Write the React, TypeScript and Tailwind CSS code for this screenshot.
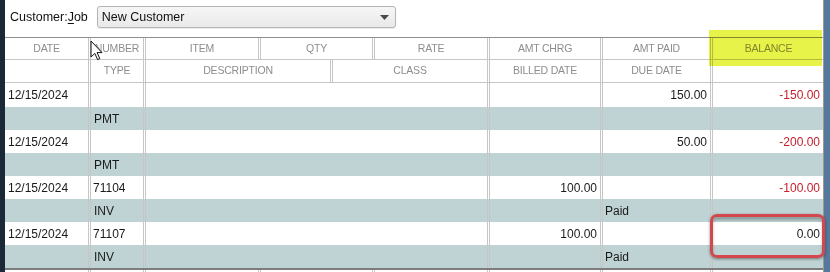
import React from 'react'

const FONT = { fontFamily: '"Liberation Sans", Arial, sans-serif' }

const headTop: [string, number][] = [
  ['DATE', 83],
  ['NUMBER', 55],
  ['ITEM', 115],
  ['QTY', 114],
  ['RATE', 115],
  ['AMT CHRG', 113],
  ['AMT PAID', 110],
  ['BALANCE', 114],
]

const headBottom: [string, number][] = [
  ['', 83],
  ['TYPE', 55],
  ['DESCRIPTION', 187],
  ['CLASS', 157],
  ['BILLED DATE', 113],
  ['DUE DATE', 110],
  ['', 114],
]

type Txn = {
  date: string
  num: string
  chrg: string
  paid: string
  bal: string
  type: string
  due: string
}

const txns: Txn[] = [
  { date: '12/15/2024', num: '', chrg: '', paid: '150.00', bal: '-150.00', type: 'PMT', due: '' },
  { date: '12/15/2024', num: '', chrg: '', paid: '50.00', bal: '-200.00', type: 'PMT', due: '' },
  { date: '12/15/2024', num: '71104', chrg: '100.00', paid: '', bal: '-100.00', type: 'INV', due: 'Paid' },
  { date: '12/15/2024', num: '71107', chrg: '100.00', paid: '', bal: '0.00', type: 'INV', due: 'Paid' },
]

function Cell({
  w,
  first,
  className = '',
  children,
}: {
  w: number
  first?: boolean
  className?: string
  children?: React.ReactNode
}) {
  return (
    <div
      style={{ width: w }}
      className={`flex h-full shrink-0 items-center overflow-hidden whitespace-nowrap ${
        first ? '' : 'border-l-[3px] border-double border-[#c6c6c6]'
      } ${className}`}
    >
      {children}
    </div>
  )
}

function HeaderRow({ cols, top }: { cols: [string, number][]; top?: boolean }) {
  return (
    <div
      className={`flex h-[23px] shrink-0 border-b border-[#c6c6c6] ${top ? 'border-t border-t-[#8f8f8f]' : ''}`}
    >
      {cols.map(([label, w], i) => (
        <Cell key={i} w={w} first={i === 0} className="justify-center">
          <span className="text-[10.5px] tracking-[-0.2px] text-[#8d8d8d]">{label}</span>
        </Cell>
      ))}
    </div>
  )
}

function TxnRows({ t, tall }: { t: Txn; tall?: boolean }) {
  const neg = t.bal.startsWith('-')
  return (
    <>
      <div
        className={`flex shrink-0 bg-white text-[12px] text-[#1a1a1a] ${tall ? 'h-[24px]' : 'h-[23px]'}`}
      >
        <Cell w={83} first className="pl-[3px]">
          {t.date}
        </Cell>
        <Cell w={55} className="pl-[2px]">
          {t.num}
        </Cell>
        <Cell w={344} />
        <Cell w={113} className="justify-end pr-[3px]">
          {t.chrg}
        </Cell>
        <Cell w={110} className="justify-end pr-[3px]">
          {t.paid}
        </Cell>
        <Cell w={114} className={`justify-end pr-[4px] ${neg ? 'text-[#c7202b]' : ''}`}>
          {t.bal}
        </Cell>
      </div>
      <div className="flex h-[23px] shrink-0 bg-[#bfd3d4] text-[12px] text-[#1a1a1a]">
        <Cell w={83} first />
        <Cell w={55} className="pl-[3px]">
          {t.type}
        </Cell>
        <Cell w={344} />
        <Cell w={113} />
        <Cell w={110} className="pl-[2px]">
          {t.due}
        </Cell>
        <Cell w={114} />
      </div>
    </>
  )
}

export default function App() {
  return (
    <div style={FONT} className="relative flex h-[272px] w-[830px] overflow-hidden bg-white">
      <div className="w-[5px] shrink-0 bg-[#1b2838]" />

      <div className="flex w-[819px] shrink-0 flex-col border-r border-[#9a9a9a]">
        <div className="flex h-[37px] shrink-0 items-center gap-[9px] pl-[5px] pb-[3px]">
          <span className="text-[12.5px] text-[#111]">
            Customer:<span className="underline underline-offset-2">J</span>ob
          </span>
          <div className="flex h-[22px] w-[299px] items-center justify-between rounded-[3px] border border-[#b4b4b4] bg-gradient-to-b from-[#f6f6f6] to-[#e9e9e9] pl-[4px] pr-[6px] shadow-[0_1px_1px_rgba(0,0,0,0.08)]">
            <span className="text-[12.5px] text-[#111]">New Customer</span>
            <svg width="9" height="5" viewBox="0 0 9 5">
              <path d="M0 0 H9 L4.5 5 Z" fill="#4a4a4a" />
            </svg>
          </div>
        </div>

        <HeaderRow cols={headTop} top />
        <HeaderRow cols={headBottom} />

        {txns.map((t, i) => (
          <TxnRows key={i} t={t} tall={i === 0} />
        ))}

        <div className="flex h-[10px] shrink-0 border-t-2 border-[#7d7d7d] bg-white">
          {headTop.map(([, w], i) => (
            <Cell key={i} w={w} first={i === 0} />
          ))}
        </div>
      </div>

      <div className="flex-1 bg-[#56789b]" />

      {/* highlighter over BALANCE header */}
      <div className="pointer-events-none absolute left-[709px] top-[30px] h-[36px] w-[113px] bg-[#e8f34a] mix-blend-multiply" />

      {/* red callout around 0.00 */}
      <div className="pointer-events-none absolute left-[710px] top-[214px] h-[44px] w-[115px] rounded-[7px] border-[3px] border-[#d4474d] shadow-[0_1px_3px_rgba(0,0,0,0.45),inset_0_3px_3px_rgba(0,0,0,0.25)]" />

      {/* mouse pointer */}
      <svg
        className="pointer-events-none absolute left-[90px] top-[40px]"
        width="13"
        height="21"
        viewBox="0 0 13 21"
      >
        <path
          d="M1 1 L1 17 L4.8 13.4 L7.6 19.6 L9.8 18.6 L7.1 12.6 L12 12.6 Z"
          fill="#fff"
          stroke="#111"
          strokeWidth="1"
          strokeLinejoin="round"
        />
      </svg>
    </div>
  )
}
